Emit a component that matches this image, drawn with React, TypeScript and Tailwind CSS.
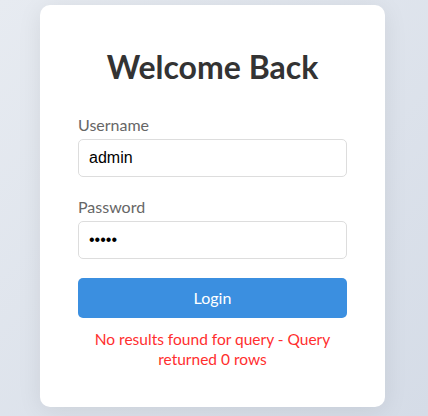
import { useState } from "react";

const LoginCard = () => {
  const [username, setUsername] = useState("admin");
  const [password, setPassword] = useState("admin");

  return (
    <div className="ml-[40px] w-[345px] rounded-[10px] bg-white px-[38px] pt-[42px] pb-[38px] shadow-[0_4px_24px_rgba(0,0,0,0.08)]">
      <h1 className="text-center text-[32px] font-bold leading-[40px] text-[#333]">
        Welcome Back
      </h1>

      <form className="mt-[28px]" onSubmit={(e) => e.preventDefault()}>
        {/* username */}
        <div className="mb-[20px]">
          <label className="mb-[4px] block text-[16px] leading-[20px] text-[#666]">
            Username
          </label>
          <input
            value={username}
            onChange={(e) => setUsername(e.target.value)}
            className="block h-[38px] w-full rounded-[5px] border border-[#ddd] px-[10px] font-['Liberation_Sans',Arial,sans-serif] text-[16px] text-black outline-none"
          />
        </div>

        {/* password */}
        <div className="mb-[19px]">
          <label className="mb-[4px] block text-[16px] leading-[20px] text-[#666]">
            Password
          </label>
          <input
            type="password"
            value={password}
            onChange={(e) => setPassword(e.target.value)}
            className="block h-[38px] w-full rounded-[5px] border border-[#ddd] px-[10px] font-['Liberation_Sans',Arial,sans-serif] text-[16px] text-black outline-none"
          />
        </div>

        <button
          type="submit"
          className="block h-[40px] w-full rounded-[5px] bg-[#3b8fe0] text-[16px] text-white"
        >
          Login
        </button>

        <p className="mt-[11px] text-center text-[15.5px] leading-[20px] text-[#ff2e2e]">
          No results found for query - Query returned 0 rows
        </p>
      </form>
    </div>
  );
};

export default function App() {
  return (
    <div className="min-h-[416px] bg-gradient-to-br from-[#e7ebf1] to-[#d5dce7] pt-[5px] font-['Lato','Noto_Sans',sans-serif]">
      <LoginCard />
    </div>
  );
}
